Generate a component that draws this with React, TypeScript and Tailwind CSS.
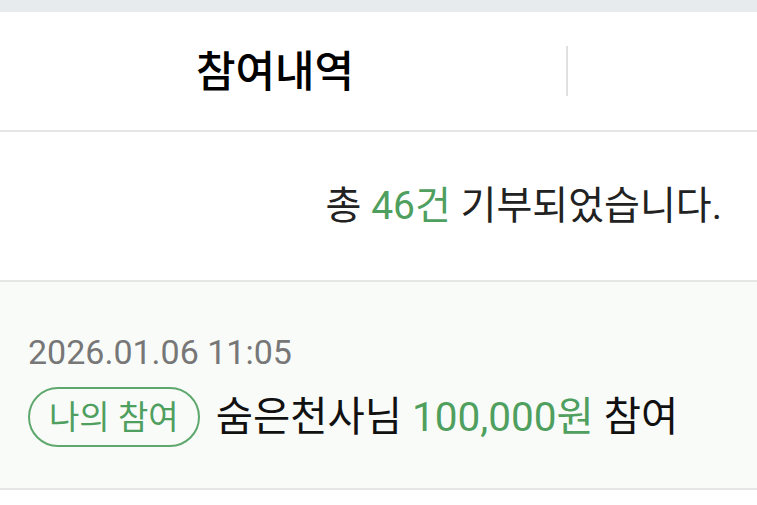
import React from "react";

export default function App() {
  const font = { fontFamily: '"Roboto", "Noto Sans CJK KR", sans-serif' };
  return (
    <div className="w-[757px] h-[505px] bg-white overflow-hidden" style={font}>
      <div className="h-[12px] bg-[#e8ebee]" />
      <div className="flex h-[120px] items-center border-b-2 border-[#e6e6e6]">
        <div className="w-[566px] flex items-center justify-center pr-[16px]">
          <span className="text-[43px] leading-[50px] font-medium text-black mt-[2px]">참여내역</span>
        </div>
        <div className="w-[2px] h-[50px] bg-[#e0e0e0]" />
      </div>
      <div className="h-[150px] flex items-center justify-end pr-[35px] border-b-2 border-[#e6e6e6]">
        <span className="text-[39px] leading-[48px] text-[#222]">
          총 <span className="text-[#4f9f5f]">46건</span> 기부되었습니다.
        </span>
      </div>
      <div className="h-[208px] bg-[#f9fbf9] border-b-2 border-[#e6e6e6] pl-[28px] pt-[50px]">
        <div className="text-[34px] leading-[40px] text-[#777]">2026.01.06 11:05</div>
        <div className="flex items-center mt-[15px]">
          <span className="h-[60px] px-[19px] rounded-full border-2 border-[#5fa86d] text-[#4f9f5f] text-[33px] flex items-center">
            나의 참여
          </span>
          <span className="ml-[16px] text-[40.5px] text-[#111]">
            숨은천사님 <span className="text-[#4f9f5f]">100,000원</span> 참여
          </span>
        </div>
      </div>
    </div>
  );
}
